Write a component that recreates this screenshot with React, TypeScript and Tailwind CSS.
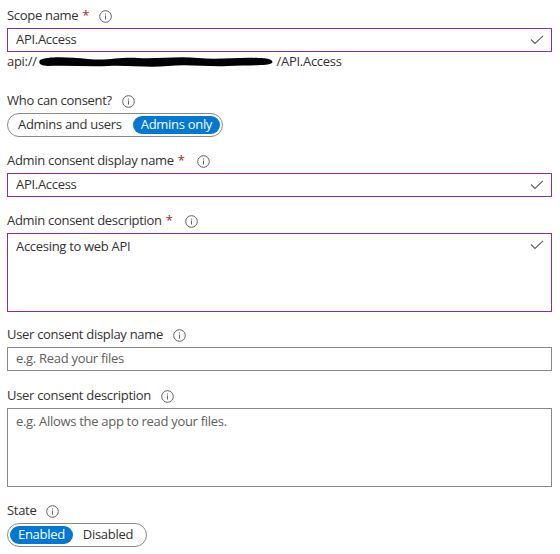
import React from "react";

const Info = () => (
  <svg width="13" height="13" viewBox="0 0 13 13" className="inline-block shrink-0">
    <circle cx="6.5" cy="6.5" r="5.8" fill="none" stroke="#605e5c" strokeWidth="1" />
    <rect x="6" y="5.5" width="1" height="4" fill="#605e5c" />
    <rect x="6" y="3.5" width="1" height="1" fill="#605e5c" />
  </svg>
);

const Check = () => (
  <svg width="14" height="10" viewBox="0 0 14 10" className="shrink-0">
    <polyline points="1,4.5 5,8.5 13,0.8" fill="none" stroke="#605e5c" strokeWidth="1.1" />
  </svg>
);

const Label = ({ text, required, gap = "ml-[12px]" }: { text: string; required?: boolean; gap?: string }) => (
  <div className="flex items-center h-[20px] text-[13px] tracking-[-0.3px] text-[#323130]">
    <span>{text}</span>
    {required && <span className="ml-[4px] text-[#a4262c]">*</span>}
    <span className={`${gap} flex items-center`}>
      <Info />
    </span>
  </div>
);

const Input = ({ value, placeholder, valid }: { value?: string; placeholder?: string; valid?: boolean }) => (
  <div
    className={`mt-[2px] h-[24px] flex items-center justify-between pl-[8px] pr-[7px] border text-[13px] tracking-[-0.3px] ${
      valid ? "border-[#8a2da5]" : "border-[#8a8886]"
    }`}
  >
    <span className={value ? "text-[#323130]" : "text-[#605e5c]"}>{value ?? placeholder}</span>
    {valid && <Check />}
  </div>
);

const TextArea = ({ value, placeholder, valid }: { value?: string; placeholder?: string; valid?: boolean }) => (
  <div
    className={`mt-[2px] h-[79px] flex justify-between pl-[8px] pr-[7px] pt-[3px] border text-[13px] tracking-[-0.3px] ${
      valid ? "border-[#8a2da5]" : "border-[#8a8886]"
    }`}
  >
    <span className={value ? "text-[#323130]" : "text-[#605e5c]"}>{value ?? placeholder}</span>
    {valid && (
      <span className="pt-[3px]">
        <Check />
      </span>
    )}
  </div>
);

const Toggle = ({ options, selected }: { options: string[]; selected: number }) => (
  <div className="mt-[2px] inline-flex items-center h-[24px] border border-[#8a8886] rounded-full px-[2px] text-[13px] tracking-[-0.3px]">
    {options.map((o, i) => (
      <span
        key={o}
        className={`h-[18px] flex items-center rounded-full ${
          i === selected
            ? "bg-[#0078d4] text-white px-[8px]"
            : i === 0
            ? "text-[#323130] pl-[8px] pr-[11px]"
            : "text-[#323130] pl-[10px] pr-[11px]"
        }`}
      >
        {o}
      </span>
    ))}
  </div>
);

export default function App() {
  return (
    <div
      className="w-[560px] h-[554px] bg-white pl-[7px] pr-[8px] pt-[6px] overflow-hidden"
      style={{ fontFamily: "'Open Sans', 'Noto Sans', sans-serif" }}
    >
      <Label text="Scope name" required gap="ml-[10px]" />
      <Input value="API.Access" valid />
      <div className="h-[20px] flex items-center text-[13px] tracking-[-0.3px] text-[#323130]">
        <span>api://</span>
        <svg width="240" height="16" viewBox="0 0 238 16" className="shrink-0">
          <path
            d="M2 6 C 10 2, 30 3, 50 5 C 70 7, 80 3, 100 4 C 120 5, 140 2, 160 4 C 180 6, 200 3, 220 4 C 230 4, 236 6, 234 9 C 230 12, 210 11, 190 12 C 170 13, 150 10, 130 12 C 110 14, 90 11, 70 12 C 50 13, 30 11, 10 12 C 2 12, 0 9, 2 6 Z"
            fill="#000"
          />
        </svg>
        <span>/API.Access</span>
      </div>
      <div className="mt-[19px]">
        <Label text="Who can consent?" gap="ml-[10px]" />
        <Toggle options={["Admins and users", "Admins only"]} selected={1} />
      </div>
      <div className="mt-[14px]">
        <Label text="Admin consent display name" required />
        <Input value="API.Access" valid />
      </div>
      <div className="mt-[14px]">
        <Label text="Admin consent description" required />
        <TextArea value="Accesing to web API" valid />
      </div>
      <div className="mt-[13px]">
        <Label text="User consent display name" gap="ml-[10px]" />
        <Input placeholder="e.g. Read your files" />
      </div>
      <div className="mt-[15px]">
        <Label text="User consent description" gap="ml-[10px]" />
        <TextArea placeholder="e.g. Allows the app to read your files." />
      </div>
      <div className="mt-[14px]">
        <Label text="State" gap="ml-[10px]" />
        <Toggle options={["Enabled", "Disabled"]} selected={0} />
      </div>
    </div>
  );
}
